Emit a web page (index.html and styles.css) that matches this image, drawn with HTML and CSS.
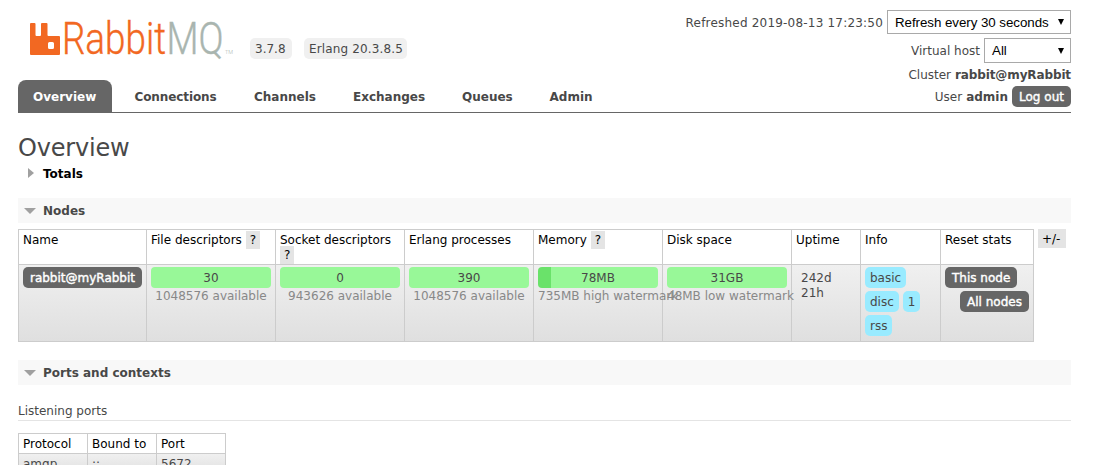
FILE: index.html
```html
<!DOCTYPE html>
<html lang="en">
<head>
<meta charset="utf-8">
<title>RabbitMQ Management</title>
<link rel="stylesheet" href="styles.css">
</head>
<body>
<header class="header">
  <div class="brand">
    <svg class="logo" width="206" height="42" viewBox="0 0 206 42" role="img" aria-label="RabbitMQ">
      <path fill="#f26822" fill-rule="evenodd" d="M1 3h3.500a1 1 0 0 1 1 1v11a1 1 0 0 0 1 1h3.500a1 1 0 0 0 1-1V4a1 1 0 0 1 1-1h4.500a1 1 0 0 1 1 1v11a1 1 0 0 0 1 1h10.500a1 1 0 0 1 1 1v17a1 1 0 0 1-1 1H1a1 1 0 0 1-1-1V4a1 1 0 0 1 1-1zM19.500 22a1.500 1.500 0 0 0-1.500 1.500v4a1.500 1.500 0 0 0 1.500 1.500h3a1.500 1.500 0 0 0 1.500-1.500v-4a1.500 1.500 0 0 0-1.500-1.500z"/>
      <text class="word rabbit" x="32" y="34" textLength="104" lengthAdjust="spacingAndGlyphs">Rabbit</text>
      <text class="word mq" x="136.500" y="34" textLength="57" lengthAdjust="spacingAndGlyphs">MQ</text>
      <text class="tm" x="195" y="33.500" textLength="8" lengthAdjust="spacingAndGlyphs">TM</text>
    </svg>
    <span class="version v1">3.7.8</span>
    <span class="version v2">Erlang 20.3.8.5</span>
  </div>
  <div class="login">
    <div class="line refresh"><span class="stamp">Refreshed 2019-08-13 17:23:50</span><div class="select wide"><span>Refresh every 30 seconds</span><i class="caret"></i></div></div>
    <div class="line vhost"><span>Virtual host</span><div class="select"><span>All</span><i class="caret"></i></div></div>
    <div class="line cluster"><span>Cluster</span><b>rabbit@myRabbit</b></div>
    <div class="line user"><span>User</span><b>admin</b><a class="button">Log out</a></div>
  </div>
  <nav class="tabs">
    <a class="tab on">Overview</a><a class="tab connections">Connections</a><a class="tab channels">Channels</a><a class="tab exchanges">Exchanges</a><a class="tab queues">Queues</a><a class="tab admin">Admin</a>
  </nav>
</header>
<main class="main">
  <h1>Overview</h1>
  <h2 class="closed"><i class="arrow right"></i><span>Totals</span></h2>
  <h2 class="bar nodes-bar"><i class="arrow down"></i><span>Nodes</span></h2>
  <div class="node-row">
    <table class="list nodes">
      <colgroup><col class="c-name"><col class="c-stat"><col class="c-stat"><col class="c-stat"><col class="c-stat"><col class="c-stat"><col class="c-up"><col class="c-info"><col class="c-reset"></colgroup>
      <thead><tr>
        <th>Name</th>
        <th>File descriptors <span class="help">?</span></th>
        <th>Socket descriptors <span class="help">?</span></th>
        <th>Erlang processes</th>
        <th>Memory <span class="help">?</span></th>
        <th>Disk space</th><th>Uptime</th><th>Info</th><th>Reset stats</th>
      </tr></thead>
      <tbody><tr>
        <td><a class="button node">rabbit@myRabbit</a></td>
        <td><div class="meter">30</div><div class="sub">1048576 available</div></td>
        <td><div class="meter">0</div><div class="sub">943626 available</div></td>
        <td><div class="meter">390</div><div class="sub">1048576 available</div></td>
        <td><div class="meter used">78MB</div><div class="sub">735MB high watermark</div></td>
        <td><div class="meter">31GB</div><div class="sub">48MB low watermark</div></td>
        <td><div class="uptime">242d 21h</div></td>
        <td><div class="tags"><span>basic</span><span>disc</span><span>1</span><span>rss</span></div></td>
        <td><div class="reset"><a class="button this">This node</a><a class="button all">All nodes</a></div></td>
      </tr></tbody>
    </table>
    <a class="columns">+/-</a>
  </div>
  <h2 class="bar ports-bar"><i class="arrow down"></i><span>Ports and contexts</span></h2>
  <h3><span>Listening ports</span></h3>
  <table class="list ports">
    <colgroup><col><col><col></colgroup>
    <thead><tr><th>Protocol</th><th>Bound to</th><th>Port</th></tr></thead>
    <tbody><tr><td>amqp</td><td>::</td><td>5672</td></tr></tbody>
  </table>
</main>
</body>
</html>
```
FILE: styles.css
```css
* { box-sizing: border-box; }
html { overflow: hidden; }
body {
  margin: 0;
  height: 465px;
  overflow: hidden;
  background: #fff;
  color: #484848;
  font: 12px/15px Verdana, "DejaVu Sans", sans-serif;
}
.header {
  display: grid;
  grid-template-columns: 1fr auto;
  grid-template-rows: 80px 32px;
  margin: 0 28px 0 18px;
  height: 113px;
  border-bottom: 1px solid #666;
}
.brand { display: flex; align-items: flex-start; padding: 20px 0 0 12px; }
.logo { flex: none; overflow: visible; }
.word { font-family: Roboto, "Open Sans", sans-serif; font-weight: 300; font-size: 45px; }
.rabbit { fill: #f26822; stroke: #f26822; stroke-width: .4px; }
.mq { fill: #a9b5af; stroke: #a9b5af; stroke-width: .4px; }
.tm { font: 300 6px Roboto, sans-serif; fill: #a9b5af; }
.version { margin-top: 18px; height: 21px; padding: 4px 5px 2px; border-radius: 5px; background: #f0f0f0; white-space: nowrap; }
.v1 { margin-left: 14px; width: 42px; }
.v2 { margin-left: 12px; width: 103px; letter-spacing: .14px; }
.login { grid-column: 2; grid-row: 1 / 3; display: flex; flex-direction: column; align-items: flex-end; padding-top: 10px; }
.line { display: flex; align-items: center; gap: 4px; white-space: nowrap; }
.line > span, .line > b { padding-top: 2px; }
.stamp { letter-spacing: .2px; }
.refresh { height: 24px; }
.vhost { height: 25px; margin-top: 4px; }
.cluster { height: 15px; margin-top: 4px; }
.cluster b { letter-spacing: -.12px; }
.user { height: 21px; margin-top: 4px; }
.select {
  display: flex;
  align-items: center;
  justify-content: space-between;
  width: 87px;
  height: 25px;
  padding: 0 6px 0 7px;
  border: 1px solid #a9a9a9;
  background: #fff;
  color: #000;
  font: 13.33px/15px "Liberation Sans", Arial, sans-serif;
}
.select.wide { width: 184px; height: 24px; letter-spacing: -.05px; }
.caret { border: 3px solid transparent; border-top: 6px solid #000; border-bottom: 0; }
.button {
  display: inline-block;
  height: 21px;
  padding: 4px 7px 2px;
  border-radius: 5px;
  background: #666;
  color: #fff;
  text-align: center;
  white-space: nowrap;
  -webkit-text-stroke: .4px #fff;
}
.user .button { width: 59px; }
.tabs { grid-row: 2; grid-column: 1; display: flex; font-weight: bold; }
.tab { height: 32px; padding: 10px 0 0 15px; }
.on { width: 94px; margin-right: 7.500px; border-radius: 8px 8px 0 0; background: #666; color: #fff; }
.connections { width: 119.500px; letter-spacing: -.1px; }
.channels { width: 99px; }
.exchanges { width: 109px; }
.queues { width: 87.500px; }
.main { padding: 22px 28px 0 18px; }
h1 { margin: 0; height: 28px; font-size: 24px; line-height: 27px; font-weight: normal; letter-spacing: -.2px; }
h2 { display: flex; align-items: center; margin: 0; height: 25px; padding-left: 6px; font-size: 12px; }
h2 span { padding-top: 2px; }
.closed { height: 20px; padding-left: 10px; color: #000; }
.bar { background: #f8f8f8; }
.nodes-bar { margin-top: 15px; }
.ports-bar { margin-top: 18px; }
.arrow { border: 5.500px solid transparent; }
.down { border-top: 6px solid #a0a0a0; border-bottom: 0; margin: 0 7px 0 0; border-left-width: 6px; border-right-width: 6px; }
.right { border-left: 6px solid #a0a0a0; border-right: 0; margin-right: 9px; }
.closed .arrow { margin-bottom: 1px; }
.node-row { display: flex; margin-top: 6px; }
.list { border-collapse: collapse; table-layout: fixed; }
.list th, .list td { border: 1px solid #ccc; text-align: left; vertical-align: top; white-space: nowrap; }
.list th { padding: 3px 4px 0; color: #000; font-weight: normal; }
.list td { padding: 2px 4px 0; }
.list tbody tr { background: linear-gradient(#f0f0f0, #dfdfdf); }
.nodes { width: 1015px; flex: none; }
.list.nodes th { height: 35px; white-space: normal; padding-left: 4px; }
.nodes td { height: 77px; }
.c-name { width: 128px; }
.c-stat { width: 129px; }
.c-up { width: 69px; }
.c-info { width: 80px; }
.c-reset { width: 93px; }
.help, .columns { padding: 2px 4px; background: #e4e4e4; color: #000; }
.columns { align-self: flex-start; width: 28px; height: 19px; margin-left: 4px; padding-top: 3px; white-space: nowrap; }
.node { width: 119px; padding-left: 0; padding-right: 0; }
.meter { width: 120px; height: 21px; padding-top: 4px; border-radius: 4px; background: #98f898; text-align: center; }
.used { background: linear-gradient(90deg, #6ae26a 13px, #98f898 13px); }
.sub { width: 120px; padding-top: 1px; color: #888; text-align: center; }
.uptime { width: 40px; padding: 4px 0 0 5px; white-space: normal; }
.tags { display: flex; flex-wrap: wrap; gap: 3px 4px; }
.tags span { height: 21px; padding: 4px 5px 2px; border-radius: 5px; background: #99ebff; }
.reset { display: flex; flex-direction: column; gap: 3px; }
.this { width: 72px; }
.all { width: 69px; margin-left: 15px; }
h3 { margin: 18px 0 12px; height: 18px; padding-top: 1px; border-bottom: 1px solid #e4e4e4; font-size: 12px; font-weight: normal; }
.ports { width: 208px; }
.list.ports th { height: 20px; }
.list.ports td { height: 20px; padding-top: 3px; }
```
